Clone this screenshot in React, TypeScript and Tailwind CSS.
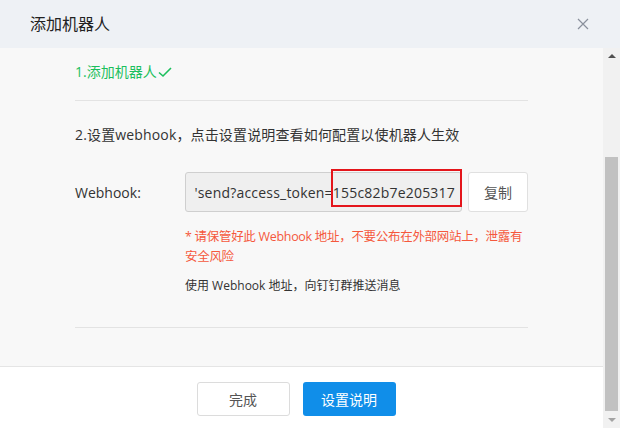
export default function App() {
  return (
    <div
      className="w-[620px] h-[428px] flex flex-col overflow-hidden bg-white"
      style={{ fontFamily: '"Open Sans", "Noto Sans CJK SC", sans-serif' }}
    >
      {/* header */}
      <div className="h-[48px] shrink-0 bg-[#eef1f5] flex items-center justify-between pl-[30px] pr-[31px]">
        <span className="text-[16px] text-[#222]">添加机器人</span>
        <svg width="12" height="12" viewBox="0 0 12 12" className="text-[#8a909c]">
          <path d="M1 1L11 11M11 1L1 11" stroke="currentColor" strokeWidth="1.2" />
        </svg>
      </div>

      <div className="flex flex-1 min-h-0">
        <div className="flex-1 flex flex-col">
          {/* body */}
          <div className="h-[319px] bg-[#f8f8f8] border-b border-[#e5e5e5] pl-[75px] pr-[75px]">
            <div className="w-[453px]">
              <div className="h-[53px] border-b border-[#e3e3e3] pt-[13px] text-[14px] text-[#1cbf5d] flex items-start">
                <span>1.添加机器人</span>
                <svg width="16" height="16" viewBox="0 0 16 16" className="mt-[3px]">
                  <path d="M2 8.5L6 12L14 4" stroke="#1cbf5d" strokeWidth="1.6" fill="none" />
                </svg>
              </div>

              <div className="pt-[23px] text-[14px] text-[#333] tracking-[0.15px]">
                2.设置webhook，点击设置说明查看如何配置以使机器人生效
              </div>

              <div className="flex items-center mt-[27px] h-[40px]">
                <span className="w-[110px] text-[14px] text-[#333]">Webhook:</span>
                <div className="relative w-[277px] h-[40px] bg-[#efefef] border border-[#cfcfcf] rounded-[3px] flex items-center justify-end pr-[6px]">
                  <span className="text-[14px] text-[#333] whitespace-nowrap tracking-[0.2px]">
                    'send?access_token=155c82b7e205317
                  </span>
                  <div className="absolute left-[145px] top-[-4px] w-[131px] h-[38px] border-2 border-[#e4151b]" />
                </div>
                <button className="ml-[6px] w-[60px] h-[40px] bg-white border border-[#e0e0e0] rounded-[3px] text-[14px] text-[#555]">
                  复制
                </button>
              </div>

              <div className="pl-[110px] pt-[15px] text-[12.5px] leading-[20px] text-[#f5583d] whitespace-nowrap tracking-[-0.3px]">
                * 请保管好此 Webhook 地址，不要公布在外部网站上，泄露有
                <br />
                安全风险
              </div>
              <div className="pl-[110px] pt-[10px] text-[12px] text-[#333] pb-[32px] border-b border-[#e3e3e3]">
                使用 Webhook 地址，向钉钉群推送消息
              </div>
            </div>
          </div>

          {/* footer */}
          <div className="flex-1 bg-white flex justify-center items-start pt-[15px] pr-[11px] gap-[13px]">
            <button className="w-[93px] h-[34px] bg-white border border-[#dcdcdc] rounded-[3px] text-[14px] text-[#555]">
              完成
            </button>
            <button className="w-[93px] h-[34px] bg-[#108ee9] rounded-[3px] text-[14px] text-white">
              设置说明
            </button>
          </div>
        </div>

        {/* scrollbar */}
        <div className="w-[17px] shrink-0 bg-[#f1f1f1] flex flex-col items-center">
          <div className="h-[17px] flex items-center justify-center">
            <div className="w-0 h-0 border-l-[4px] border-r-[4px] border-b-[4px] border-l-transparent border-r-transparent border-b-[#505050]" />
          </div>
          <div className="h-[92px]" />
          <div className="w-[13px] h-[255px] bg-[#c1c1c1]" />
          <div className="h-[17px] flex items-center justify-center">
            <div className="w-0 h-0 border-l-[4px] border-r-[4px] border-t-[4px] border-l-transparent border-r-transparent border-t-[#a3a3a3]" />
          </div>
        </div>
      </div>
    </div>
  )
}
